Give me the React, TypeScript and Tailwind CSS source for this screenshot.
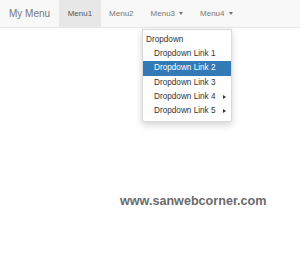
import React from 'react';

const links = [
  { label: 'Dropdown Link 1' },
  { label: 'Dropdown Link 2', active: true },
  { label: 'Dropdown Link 3' },
  { label: 'Dropdown Link 4', sub: true },
  { label: 'Dropdown Link 5', sub: true },
];

function Caret() {
  return (
    <span className="ml-[4px] inline-block h-0 w-0 border-x-[2.5px] border-t-[3px] border-x-transparent border-t-current align-middle" />
  );
}

export default function App() {
  return (
    <div className="h-[267px] w-[300px] bg-white font-['Liberation_Sans',Arial,sans-serif]">
      {/* Navbar */}
      <nav className="flex h-[28px] border-b border-[#e7e7e7] bg-[#f8f8f8]">
        <span className="px-[9px] text-[10px] leading-[27px] text-[#777]">My Menu</span>
        <ul className="flex text-[8px] leading-[27px] text-[#777]">
          <li className="bg-[#e7e7e7] px-[8.5px] text-[#555]">Menu1</li>
          <li className="px-[8.5px]">Menu2</li>
          <li className="relative px-[8.5px]">
            Menu3
            <Caret />
            {/* Open dropdown */}
            <div className="absolute left-0 top-[29px] z-10 w-[90px] rounded-b-[2px] border border-black/15 bg-white py-[3px] text-[8.2px] leading-[14.2px] text-[#333] shadow-[0_3px_7px_rgba(0,0,0,0.175)]">
              <div className="pl-[3px]">Dropdown</div>
              {links.map((link) => (
                <div
                  key={link.label}
                  className={
                    link.active
                      ? 'flex items-center bg-[#337ab7] pl-[11px] pr-[5px] text-white'
                      : 'flex items-center pl-[11px] pr-[5px]'
                  }
                >
                  <span>{link.label}</span>
                  {link.sub && (
                    <span className="ml-auto h-0 w-0 border-y-[2.5px] border-l-[3px] border-y-transparent border-l-[#333]" />
                  )}
                </div>
              ))}
            </div>
          </li>
          <li className="px-[8.5px]">
            Menu4
            <Caret />
          </li>
        </ul>
      </nav>

      {/* Watermark */}
      <div className="mt-[166px] pl-[120px] text-[12.6px] font-bold leading-[15px] text-[#6b6b6b]">
        www.sanwebcorner.com
      </div>
    </div>
  );
}
